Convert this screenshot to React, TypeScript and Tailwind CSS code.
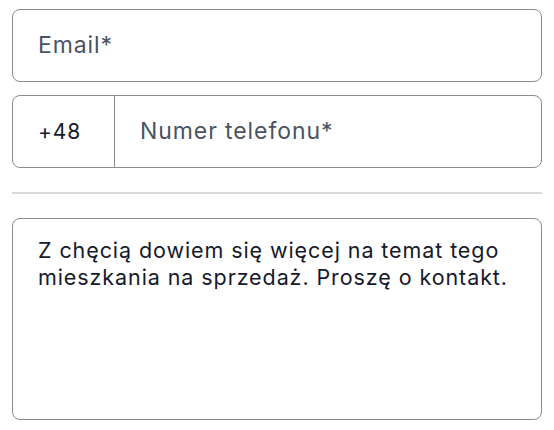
import _React from "react";

const App = () => {
  return (
    <div
      className="w-[554px] h-[430px] bg-white px-3 pt-[9px] tracking-[0.057em]"
      style={{ fontFamily: "Inter, 'Noto Sans', sans-serif" }}>
      <div className="flex flex-col gap-[13px]">
        {/* Email */}
        <div className="flex h-[73px] items-center rounded-lg border border-[#8c8c8c] px-[25px]">
          <span className="text-[23px] text-[#4b5361]">Email*</span>
        </div>
        {/* Telefon */}
        <div className="flex h-[73px] items-stretch rounded-lg border border-[#8c8c8c]">
          <div className="flex w-[102px] items-center border-r border-[#8c8c8c] px-[25px]">
            <span className="text-[21px] text-[#161a2b]">+48</span>
          </div>
          <div className="flex flex-1 items-center px-[25px]">
            <span className="text-[23px] text-[#4b5361]">Numer telefonu*</span>
          </div>
        </div>
      </div>
      <div className="mt-[24px] h-[2px] bg-[#d9d9d9]" />
      {/* Wiadomość */}
      <div className="mt-[24px] h-[202px] rounded-lg border border-[#8c8c8c] px-[25px] pt-[18px]">
        <p className="text-[21.5px] leading-[27px] text-[#161a2b]">
          Z chęcią dowiem się więcej na temat tego mieszkania na sprzedaż. Proszę o kontakt.
        </p>
      </div>
    </div>
  );
};

export default App;
